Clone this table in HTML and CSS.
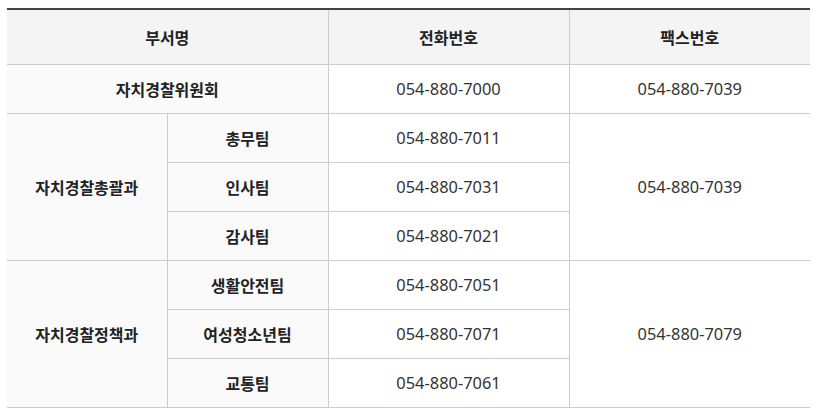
FILE: index.html
```html
<!DOCTYPE html>
<html lang="ko">
<head>
<meta charset="utf-8">
<link rel="stylesheet" href="styles.css">
</head>
<body>
<table class="tbl">
  <colgroup>
    <col class="c1"><col class="c2"><col class="c3"><col class="c4">
  </colgroup>
  <thead>
    <tr><th colspan="2">부서명</th><th>전화번호</th><th>팩스번호</th></tr>
  </thead>
  <tbody>
    <tr><th colspan="2" class="sub">자치경찰위원회</th><td>054-880-7000</td><td>054-880-7039</td></tr>
    <tr><th rowspan="3" class="sub">자치경찰총괄과</th><th class="sub">총무팀</th><td>054-880-7011</td><td rowspan="3">054-880-7039</td></tr>
    <tr><th class="sub">인사팀</th><td>054-880-7031</td></tr>
    <tr><th class="sub">감사팀</th><td>054-880-7021</td></tr>
    <tr><th rowspan="3" class="sub">자치경찰정책과</th><th class="sub">생활안전팀</th><td>054-880-7051</td><td rowspan="3">054-880-7079</td></tr>
    <tr><th class="sub">여성청소년팀</th><td>054-880-7071</td></tr>
    <tr><th class="sub">교통팀</th><td>054-880-7061</td></tr>
  </tbody>
</table>
</body>
</html>
```
FILE: styles.css
```css
html, body {
  margin: 0;
  padding: 0;
  background: #fff;
}
body {
  padding: 8px 8px 0 7px;
  font-family: "Noto Sans CJK KR", "Noto Sans", sans-serif;
  font-size: 16px;
  color: #333;
}
.tbl {
  width: 803px;
  border-collapse: collapse;
  table-layout: fixed;
  border-top: 2px solid #444;
}
.c1 { width: 160px; }
.c2 { width: 161px; }
.c3 { width: 241px; }
.c4 { width: 241px; }
.tbl th, .tbl td {
  border: 1px solid #ccc;
  text-align: center;
  vertical-align: middle;
  padding: 0;
  line-height: 24px;
}
.tbl tr > :first-child { border-left: 0; }
.tbl tr > :last-child { border-right: 0; }
.tbl thead th {
  background: #f4f4f4;
  height: 54px;
  font-weight: 700;
  color: #222;
  border-top: 0;
}
.tbl tbody th, .tbl tbody td {
  height: 48px;
}
.tbl tbody th.sub {
  background: #fafafa;
  font-weight: 700;
  color: #222;
}
.tbl tbody td {
  background: #fff;
  color: #333;
  font-family: "Noto Sans", "Noto Sans CJK KR", sans-serif;
  font-size: 16.4px;
}
.tbl tbody tr:nth-child(2) td:last-child,
.tbl tbody tr:nth-child(5) td:last-child {
  border-right: 0;
}
```
